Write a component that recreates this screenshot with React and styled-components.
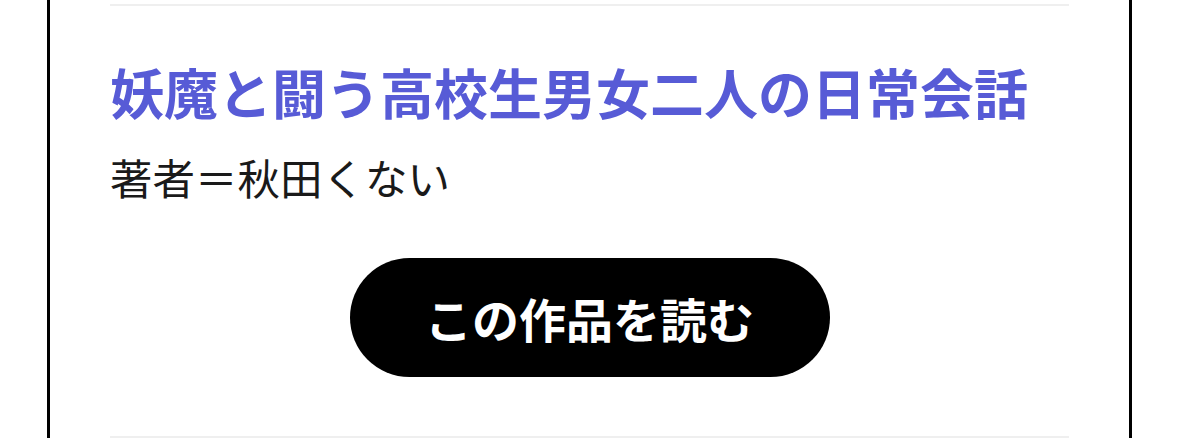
import React from "react";
import styled, { createGlobalStyle } from "styled-components";

const Global = createGlobalStyle`
  *, *::before, *::after { box-sizing: border-box; }
  html, body { margin: 0; padding: 0; background: #fff; }
  body { font-family: "Noto Sans CJK JP", "Noto Sans", sans-serif; }
`;

const Frame = styled.div`
  margin-left: 47px;
  width: 1085px;
  border-left: 3px solid #000;
  border-right: 3px solid #000;
  padding: 4px 60px 0 60px;
  height: 438px;
  overflow: hidden;
`;

const Divider = styled.div`
  height: 2px;
  background: #efefef;
`;

const Item = styled.article`
  display: flex;
  flex-direction: column;
  padding: 53px 0 59px;
`;

const Title = styled.h2`
  margin: 0;
  font-size: 54px;
  line-height: 65px;
  font-weight: 700;
  color: #575bd6;
  white-space: nowrap;
`;

const Author = styled.p`
  margin: 28px 0 0;
  font-size: 42.5px;
  line-height: 50px;
  font-weight: 400;
  color: #1a1a1a;
`;

const ReadButton = styled.button`
  align-self: center;
  margin-top: 56px;
  width: 480px;
  height: 119px;
  border: none;
  border-radius: 60px;
  background: #000;
  color: #fff;
  font-family: inherit;
  font-size: 47px;
  font-weight: 700;
  cursor: pointer;
`;

export default function App() {
  return (
    <>
      <Global />
      <Frame>
        <Divider />
        <Item>
          <Title>妖魔と闘う高校生男女二人の日常会話</Title>
          <Author>著者＝秋田くない</Author>
          <ReadButton>この作品を読む</ReadButton>
        </Item>
        <Divider />
      </Frame>
    </>
  );
}
